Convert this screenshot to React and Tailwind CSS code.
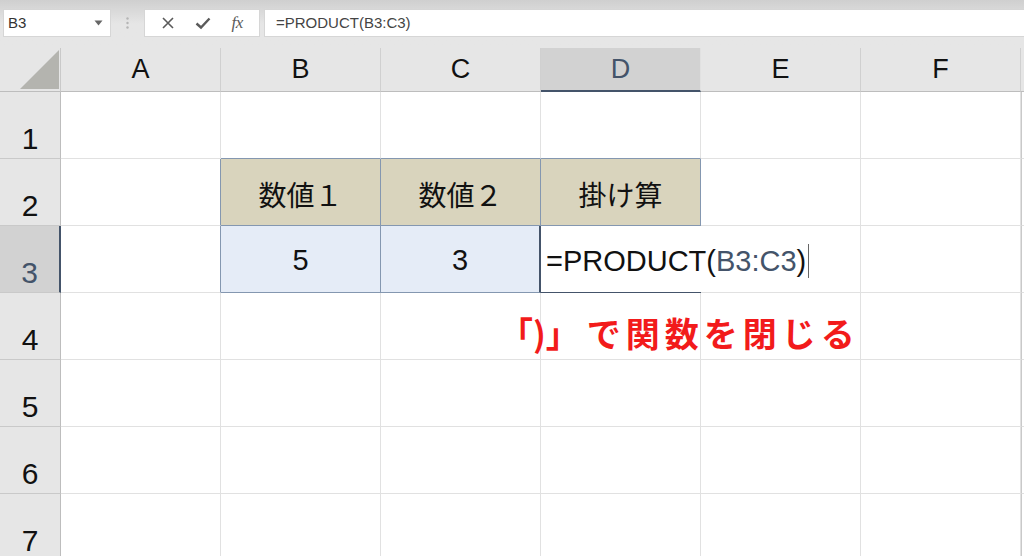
import React from 'react';

const cols = ['A', 'B', 'C', 'D', 'E', 'F'];
const rows = [1, 2, 3, 4, 5, 6, 7];

const sans = "font-['Liberation_Sans',Arial,sans-serif]";
const jp = "font-['Noto_Sans_CJK_JP','Liberation_Sans',sans-serif]";

function cellClass(col, row) {
  const key = col + row;
  switch (key) {
    case 'A2':
    case 'A3':
      return 'border-r border-b border-r-[#8497b0] border-b-[#e1e1e1] bg-white';
    case 'B1':
    case 'C1':
    case 'D1':
      return 'border-r border-b border-r-[#e1e1e1] border-b-[#8497b0] bg-white';
    case 'B2':
    case 'C2':
    case 'D2':
      return 'border-r border-b border-[#8497b0] bg-[#d9d4bd]';
    case 'B3':
      return 'border-r border-b border-[#8497b0] bg-[#e5ecf7]';
    case 'C3':
      return 'border-r-2 border-b border-r-[#44546a] border-b-[#8497b0] bg-[#e5ecf7]';
    case 'D3':
      return 'border-b-2 border-b-[#44546a] bg-white relative';
    default:
      return 'border-r border-b border-[#e1e1e1] bg-white';
  }
}

function Toolbar() {
  return (
    <div className="h-[48px] shrink-0 bg-gradient-to-b from-[#cfcfcf] via-[#e6e6e6] to-[#e6e6e6] flex items-start pt-[9px] pl-[3px]">
      <div className="w-[108px] h-[28px] bg-white border border-[#d6d6d6] flex items-center justify-between pl-[4px] pr-[7px]">
        <span className={`${sans} text-[15px] text-[#333]`}>B3</span>
        <svg width="9" height="6" viewBox="0 0 9 6">
          <path d="M0.5 0.5 L8.5 0.5 L4.5 5.5 Z" fill="#666" />
        </svg>
      </div>
      <div className="w-[33px] h-[28px] flex items-center justify-center">
        <svg width="3" height="12" viewBox="0 0 3 12">
          <circle cx="1.5" cy="1.5" r="1.2" fill="#b5b5b5" />
          <circle cx="1.5" cy="6" r="1.2" fill="#b5b5b5" />
          <circle cx="1.5" cy="10.5" r="1.2" fill="#b5b5b5" />
        </svg>
      </div>
      <div className="w-[116px] h-[28px] bg-white border border-[#d6d6d6] flex items-center justify-around px-[6px]">
        <svg width="14" height="14" viewBox="0 0 14 14">
          <path d="M2 2 L12 12 M12 2 L2 12" stroke="#5a5a5a" strokeWidth="1.6" />
        </svg>
        <svg width="16" height="14" viewBox="0 0 16 14">
          <path d="M1.5 7.5 L6 11.5 L14.5 2.5" stroke="#5a5a5a" strokeWidth="2.4" fill="none" />
        </svg>
        <span className="font-['Liberation_Serif',serif] italic text-[17px] text-[#5a5a5a] tracking-[-0.5px]">fx</span>
      </div>
      <div className="ml-[4px] flex-1 h-[28px] bg-white border-y border-l border-[#d6d6d6] flex items-center pl-[11px]">
        <span className={`${sans} text-[15px] text-[#444]`}>=PRODUCT(B3:C3)</span>
      </div>
    </div>
  );
}

function ColumnHeaders() {
  return (
    <>
      <div className="h-[44px] bg-[#e6e6e6] border-r border-b border-r-[#c9c9c9] border-b-[#bdbdbd] flex items-end justify-end pb-[1px]">
        <svg width="42" height="42" viewBox="0 0 42 42">
          <path d="M41 2 L41 41 L2 41 Z" fill="#b4b4af" />
        </svg>
      </div>
      {cols.map((c) =>
        c === 'D' ? (
          <div
            key={c}
            className={`h-[44px] bg-[#d2d2d2] border-b-2 border-b-[#44546a] border-r border-r-[#e1e1e1] flex items-center justify-center ${sans} text-[27px] text-[#44546a]`}
          >
            {c}
          </div>
        ) : (
          <div
            key={c}
            className={`h-[44px] bg-[#e6e6e6] border-r border-b border-r-[#d0d0d0] border-b-[#bdbdbd] flex items-center justify-center ${sans} text-[27px] text-[#111]`}
          >
            {c}
          </div>
        )
      )}
      <div className="h-[44px] bg-[#e6e6e6] border-b border-[#bdbdbd]" />
    </>
  );
}

function CellContent({ col, row }) {
  const key = col + row;
  if (key === 'B2') return <span className={`${jp} text-[28px] text-[#111]`}>数値１</span>;
  if (key === 'C2') return <span className={`${jp} text-[28px] text-[#111]`}>数値２</span>;
  if (key === 'D2') return <span className={`${jp} text-[28px] text-[#111]`}>掛け算</span>;
  if (key === 'B3') return <span className={`${sans} text-[29px] text-[#111]`}>5</span>;
  if (key === 'C3') return <span className={`${sans} text-[29px] text-[#111]`}>3</span>;
  if (key === 'D3')
    return (
      <div className="absolute left-0 top-0 bottom-[-1px] w-[270px] bg-white z-10 flex items-center pl-[5px] pt-[4px]">
        <span className={`${sans} text-[29px] text-[#111] whitespace-nowrap leading-none`}>
          =PRODUCT(<span className="text-[#44546a]">B3:C3</span>)
        </span>
        <span className="ml-[2px] w-[1px] h-[34px] bg-[#666]" />
      </div>
    );
  if (key === 'C4')
    return (
      <div
        className={`absolute left-[118px] top-[23px] z-10 flex whitespace-nowrap ${jp} font-bold text-[34px] leading-none text-[#f21b1b]`}
      >
        <span>「)」</span>
        <span className="ml-[7px] tracking-[5px]">で関数を閉じる</span>
      </div>
    );
  return null;
}

export default function App() {
  return (
    <div className="w-[1024px] h-[556px] overflow-hidden bg-[#e6e6e6] flex flex-col">
      <Toolbar />
      <div className="grid grid-cols-[61px_repeat(6,160px)_1fr] grid-rows-[44px_repeat(7,67px)]">
        <ColumnHeaders />
        {rows.map((r) => (
          <React.Fragment key={r}>
            {r === 3 ? (
              <div className={`bg-[#d2d2d2] border-r-2 border-b border-r-[#44546a] border-b-[#c9c9c9] flex items-end justify-center ${sans} text-[30px] text-[#44546a]`}>
                <span className="translate-y-[3px]">{r}</span>
              </div>
            ) : (
              <div className={`bg-[#e6e6e6] border-r border-b border-r-[#bdbdbd] border-b-[#c9c9c9] flex items-end justify-center ${sans} text-[30px] text-[#111]`}>
                <span className="translate-y-[3px]">{r}</span>
              </div>
            )}
            {cols.map((c) => (
              <div key={c + r} className={`${cellClass(c, r)} relative flex items-center justify-center pt-[4px]`}>
                <CellContent col={c} row={r} />
              </div>
            ))}
            <div className="bg-white border-l border-b border-l-[#c9c9c9] border-b-[#e1e1e1]" />
          </React.Fragment>
        ))}
      </div>
    </div>
  );
}
